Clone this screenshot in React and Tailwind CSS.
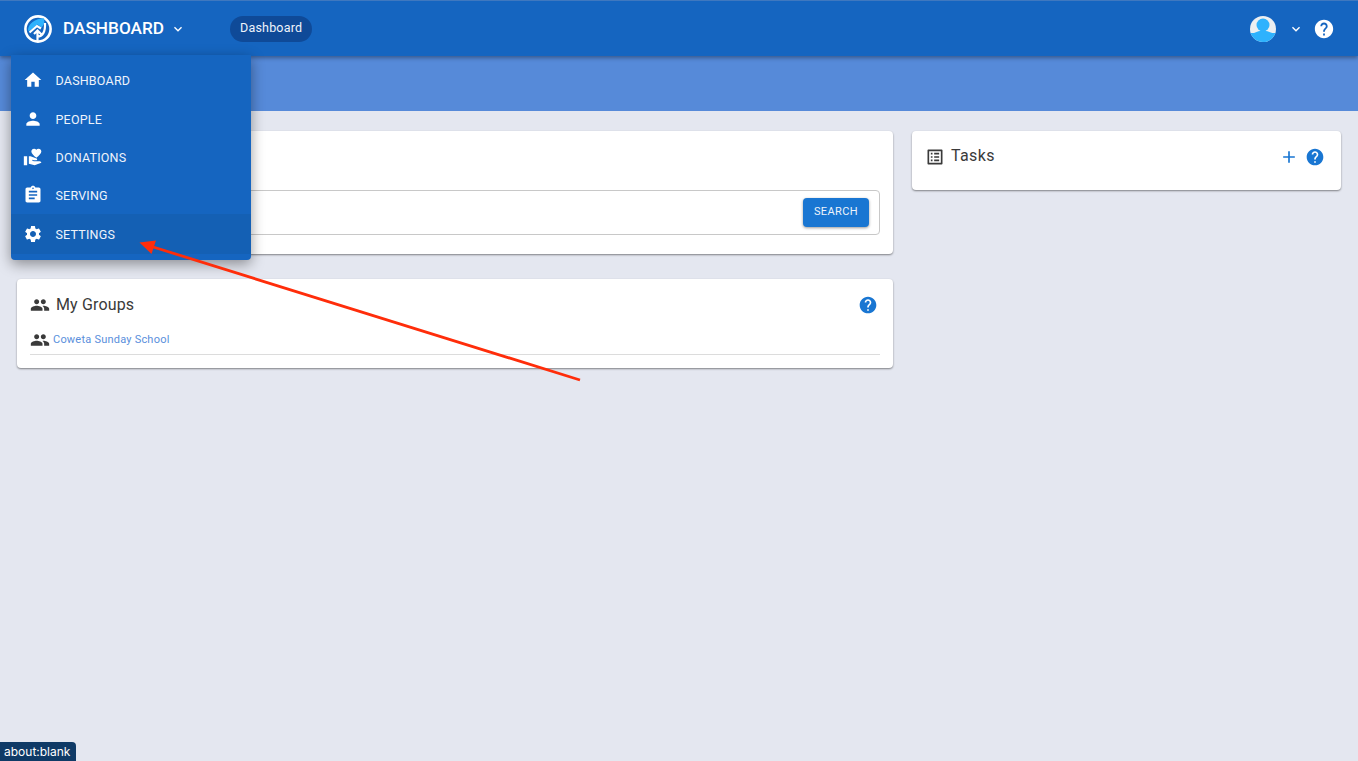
import React from "react";
import { MdHome, MdPerson, MdVolunteerActivism, MdAssignment, MdSettings, MdPeople, MdListAlt, MdAdd, MdHelp, MdExpandMore } from "react-icons/md";

const items = [
  ["DASHBOARD", MdHome, "h-[38px]"],
  ["PEOPLE", MdPerson, "h-[39px] pt-px"],
  ["DONATIONS", MdVolunteerActivism, "h-[38px]"],
  ["SERVING", MdAssignment, "h-[38px]"],
];

function Logo() {
  return (
    <svg width="30" height="30" viewBox="0 0 30 30" fill="none">
      <circle cx="15" cy="15" r="12.6" stroke="#fff" strokeWidth="2.6" />
      <path d="M5 16.5C5 9.5 12 4.5 21 4.2C22 9 20.5 11.5 18.5 13.5L14.5 10.5L6.5 17Z" fill="#2eb2fd" />
      <path d="M6.5 18.5L14 12L18 14.5M14.5 27V16.5M11 20L14.5 16.5L18 20M14.5 22.5C19.5 22.5 22.5 18 22 9" stroke="#fff" strokeWidth="2.2" />
    </svg>
  );
}

function Avatar() {
  return (
    <svg width="26" height="26" viewBox="0 0 26 26">
      <defs><clipPath id="av"><circle cx="13" cy="13" r="13" /></clipPath></defs>
      <g clipPath="url(#av)">
        <rect width="26" height="26" fill="#eceff1" />
        <circle cx="13" cy="9" r="6.5" fill="#2eb2fd" />
        <rect x="0" y="17" width="26" height="9" fill="#2eb2fd" />
        <path d="M4 17 Q13 12 22 17Z" fill="#2eb2fd" />
      </g>
    </svg>
  );
}

function Card({ className = "", children }) {
  return <div className={"bg-white rounded shadow-[0_1px_2px_rgba(0,0,0,0.45)] " + className}>{children}</div>;
}

export default function App() {
  return (
    <div className="relative h-[761px] w-[1358px] overflow-hidden bg-[#e4e7f0] font-['Roboto',sans-serif] text-[#3a3a3a]">
      <header className="relative z-10 flex h-[56px] items-center border-t border-[#3f78bf] bg-[#1565c0] pl-[23px] pr-[23px] text-white shadow-[0_2px_4px_rgba(0,0,0,0.35)]">
        <Logo />
        <span className="ml-[10px] text-[17.2px] font-medium leading-none">DASHBOARD</span>
        <MdExpandMore className="ml-[6px] text-[16px]" />
        <span className="ml-[44px] flex h-[26px] items-center rounded-full bg-[#0f4a98] px-[10px] text-[12.5px] tracking-[0.2px] text-[#eef3fb]">Dashboard</span>
        <div className="ml-auto flex items-center">
          <Avatar />
          <MdExpandMore className="ml-[12px] text-[16px]" />
          <MdHelp className="ml-[9px] text-[22px]" />
        </div>
      </header>

      <div className="h-[55px] bg-[#568ad9]" />

      <main className="flex items-start gap-[19px] pl-[17px] pt-[20px]">
        <div className="flex w-[876px] flex-col gap-[25px]">
          <Card className="h-[123px] px-[13px] pt-[59px]">
            <div className="flex h-[45px] items-center justify-end rounded border border-[#c8c8c8] pr-[10px]">
              <button className="flex h-[29px] w-[66px] items-center justify-center rounded bg-[#1976d2] text-[11px] tracking-[0.4px] text-[#eef3fb] shadow-[0_1px_3px_rgba(0,0,0,0.4)]">SEARCH</button>
            </div>
          </Card>
          <Card className="h-[89px] px-[13px]">
            <div className="flex h-[51px] items-center">
              <MdPeople className="text-[20px]" />
              <span className="ml-[6px] text-[16px] tracking-[0.15px]">My Groups</span>
              <MdHelp className="ml-auto mr-[2px] text-[20px] text-[#1976d2]" />
            </div>
            <div className="flex h-[25px] items-center border-b border-[#dcdcdc] pb-[3px]">
              <MdPeople className="-mt-[2px] text-[20px]" />
              <span className="ml-[3px] text-[11px] tracking-[0.22px] text-[#5a8fdc]">Coweta Sunday School</span>
            </div>
          </Card>
        </div>
        <Card className="flex h-[59px] w-[429px] items-start pl-[13px] pr-[16px] pt-[15px]">
          <MdListAlt className="mt-[1px] text-[20px]" />
          <span className="ml-[6px] text-[16px] leading-[20px] tracking-[0.35px]">Tasks</span>
          <MdAdd className="ml-auto mt-[1px] text-[20px] text-[#1976d2]" />
          <MdHelp className="ml-[6px] mt-[1px] text-[20px] text-[#1976d2]" />
        </Card>
      </main>

      <nav className="absolute left-[11px] top-[55px] z-20 h-[205px] w-[240px] overflow-hidden rounded-b bg-[#1565c0] pt-[6px] text-white shadow-[0_4px_14px_rgba(0,0,0,0.4)]">
        {items.map(([label, Icon, h]) => (
          <div key={label} className={"flex items-center pl-[12px] " + h}>
            <span className="flex w-[20px] justify-center"><Icon className="text-[20px]" /></span>
            <span className="relative top-px ml-[12.5px] text-[12.5px] tracking-[0.2px] text-[#eef3fb]">{label}</span>
          </div>
        ))}
        <div className="flex h-[40px] items-center bg-[#1460b4] pl-[12px]">
          <span className="flex w-[20px] justify-center"><MdSettings className="text-[20px]" /></span>
          <span className="relative top-px ml-[12.5px] text-[12.5px] tracking-[0.2px] text-[#eef3fb]">SETTINGS</span>
        </div>
      </nav>

      <svg className="absolute left-0 top-0 z-30" width="1358" height="761" fill="none">
        <path d="M580 380L150 246" stroke="#ff2d0a" strokeWidth="2.8" />
        <path d="M139.5 242.5L156 240.5L151.5 254Z" fill="#ff2d0a" />
      </svg>

      <div className="absolute bottom-0 left-0 z-30 flex h-[19px] w-[76px] items-center rounded-tr bg-[#0f3a66] pl-[4px] font-['Inter',sans-serif] text-[12px] text-white">about:blank</div>
    </div>
  );
}
